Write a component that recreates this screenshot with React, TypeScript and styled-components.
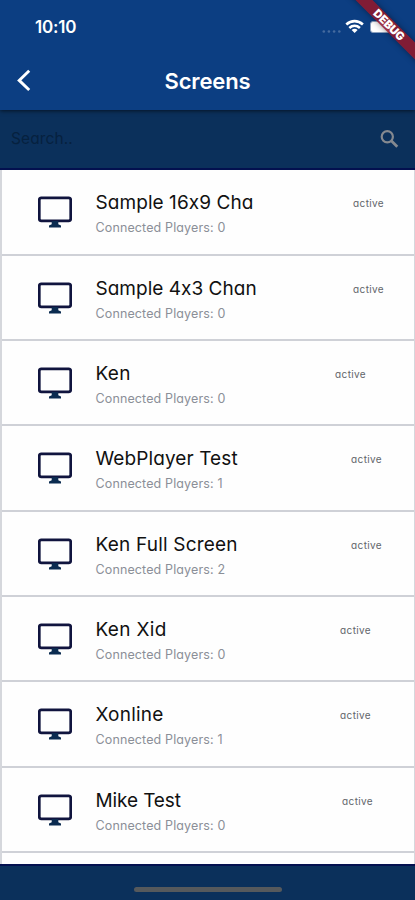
import React from "react";
import styled, { createGlobalStyle } from "styled-components";

const GlobalStyle = createGlobalStyle`
  * { box-sizing: border-box; }
  body { margin: 0; background: #0b305b; overflow: hidden; }
`;

const Phone = styled.main`
  position: relative;
  display: flex;
  flex-direction: column;
  width: 415px;
  height: 900px;
  overflow: hidden;
  background: #0b305b;
  font-family: Inter, "Open Sans", sans-serif;
  font-feature-settings: "cv11";
`;

const Header = styled.header`
  display: flex;
  flex-direction: column;
  flex: none;
  height: 110px;
  background: #0c3e82;
  box-shadow: 0 1px 4px rgba(0, 0, 0, 0.6);
  z-index: 1;
`;

const StatusBar = styled.div`
  display: flex;
  align-items: center;
  height: 53px;
  padding: 3px 10px 0 35px;
`;

const Clock = styled.time`
  flex: 1;
  padding-bottom: 2px;
  color: #fff;
  font-size: 17px;
  font-weight: 600;
  letter-spacing: -0.2px;
`;

const StatusIcons = styled.svg`
  display: block;
  width: 84px;
  height: 22px;
`;

const NavBar = styled.div`
  display: grid;
  grid-template-columns: 48px 1fr 48px;
  align-items: center;
  height: 56px;
`;

const BackButton = styled.button`
  display: flex;
  width: 48px;
  height: 48px;
  padding: 12px 0 0 16px;
  border: 0;
  background: none;
`;

const Title = styled.h1`
  margin: 0;
  color: #fff;
  font-size: 22px;
  font-weight: 600;
  line-height: 28px;
  letter-spacing: -0.15px;
  text-align: center;
`;

const SearchBar = styled.div`
  display: flex;
  flex: none;
  align-items: center;
  justify-content: space-between;
  height: 60px;
  padding: 0 16px 2px 11px;
  border-bottom: 2px solid #03104f;
`;

const SearchInput = styled.input`
  width: 200px;
  padding: 0;
  border: 0;
  outline: 0;
  background: none;
  font: 400 15.5px Inter, sans-serif;
  font-feature-settings: "cv11";
  letter-spacing: 0.1px;
  &::placeholder { color: #06213f; opacity: 1; }
`;

const List = styled.ul`
  flex: none;
  height: 694px;
  margin: 0;
  padding: 0.4px 0 0;
  overflow: hidden;
  list-style: none;
  background: #fefefe;
  border: solid #d5d7dc;
  border-width: 0 1px 0 2px;
`;

const Row = styled.li`
  display: flex;
  height: 85.35px;
  padding: 21px 0 0 36px;
  border-bottom: 2px solid #cfd1d7;
`;

const MonitorIcon = styled.svg`
  flex: none;
  width: 34px;
  height: 33px;
  margin-top: 5px;
`;

const Details = styled.div`
  flex: 1;
  padding-left: 23.5px;
`;

const Name = styled.div<{ $spacing: number }>`
  color: #111;
  font-size: 19px;
  font-weight: 400;
  line-height: 24px;
  letter-spacing: ${({ $spacing }) => $spacing}px;
  white-space: nowrap;
`;

const Players = styled.div`
  margin-top: 4px;
  color: #8b8f98;
  font-size: 12.5px;
  line-height: 18px;
  letter-spacing: 0.13px;
  white-space: nowrap;
`;

const Status = styled.span<{ $inset: number }>`
  margin-right: ${({ $inset }) => $inset}px;
  padding-top: 6px;
  color: #62656a;
  font-size: 10px;
  line-height: 13px;
  letter-spacing: 0.35px;
`;

const Footer = styled.footer`
  display: flex;
  flex: 1;
  justify-content: center;
  padding-top: 21px;
  border-top: 2px solid #03104f;
`;

const HomeIndicator = styled.div`
  width: 148px;
  height: 5px;
  border-radius: 3px;
  background: #56595c;
`;

const RibbonCorner = styled.div`
  position: absolute;
  top: 0;
  right: 0;
  z-index: 2;
  width: 80px;
  height: 80px;
  overflow: hidden;
`;

const Ribbon = styled.div`
  position: absolute;
  top: 19px;
  left: -3px;
  width: 114px;
  height: 12px;
  transform: rotate(45deg);
  background: rgba(145, 24, 42, 0.88);
  box-shadow: 0 0 6px rgba(0, 0, 0, 0.4);
  color: #fff;
  font-size: 11.3px;
  font-weight: 900;
  line-height: 12px;
  letter-spacing: -0.1px;
  text-align: center;
`;

const screens = [
  { name: "Sample 16x9 Cha", players: 0, spacing: 0.07, inset: 30 },
  { name: "Sample 4x3 Chan", players: 0, spacing: 0.02, inset: 30 },
  { name: "Ken", players: 0, spacing: 0.3, inset: 48 },
  { name: "WebPlayer Test", players: 1, spacing: 0.1, inset: 32 },
  { name: "Ken Full Screen", players: 2, spacing: 0.2, inset: 32 },
  { name: "Ken Xid", players: 0, spacing: 0.35, inset: 43 },
  { name: "Xonline", players: 1, spacing: 0.2, inset: 43 },
  { name: "Mike Test", players: 0, spacing: -0.1, inset: 41 },
];

export default function App() {
  return (
    <Phone>
      <GlobalStyle />
      <Header>
        <StatusBar>
          <Clock>10:10</Clock>
          <StatusIcons viewBox="0 0 84 22" aria-hidden="true">
            <g fill="#456b9f">
              <circle cx="2.8" cy="14.5" r="1.3" />
              <circle cx="7.9" cy="14.5" r="1.3" />
              <circle cx="13.1" cy="14.5" r="1.3" />
              <circle cx="18.3" cy="14.5" r="1.3" />
            </g>
            <g fill="none" stroke="#fff" strokeWidth="2.6">
              <path d="M25.3 7.5c5-4.5 11.6-4.5 16.6 0" />
              <path d="M28.3 11c3.2-2.8 7.4-2.8 10.6 0" />
            </g>
            <path d="M30.6 12.9c1.9-1.5 4.1-1.5 6 0L33.6 16z" fill="#fff" />
            <rect x="49.5" y="4.5" width="23" height="11" rx="2.5" fill="#fff" stroke="#899fbe" />
          </StatusIcons>
        </StatusBar>
        <NavBar>
          <BackButton aria-label="Back">
            <svg width="15" height="23" viewBox="0 0 15 23">
              <path d="M13.2 1.8 3.2 11.4l10 9.6" fill="none" stroke="#fff" strokeWidth="2.9" />
            </svg>
          </BackButton>
          <Title>Screens</Title>
        </NavBar>
      </Header>
      <SearchBar>
        <SearchInput placeholder="Search.." />
        <svg width="19" height="19" viewBox="0 0 19 19" fill="none" stroke="#858990">
          <circle cx="7.3" cy="7.8" r="5.6" strokeWidth="2.2" />
          <path d="m11.3 11.8 6 6" strokeWidth="2.7" />
        </svg>
      </SearchBar>
      <List>
        {screens.map(({ name, players, spacing, inset }) => (
          <Row key={name}>
            <MonitorIcon viewBox="0 0 34 33" aria-hidden="true">
              <rect x="1.3" y="1.8" width="31.4" height="23" rx="2" fill="none" stroke="#10143e" strokeWidth="2.7" />
              <path d="M13.7 25h6.6v3.2l2.7 1.3v2h-12v-2l2.7-1.3z" fill="#0b2b50" />
            </MonitorIcon>
            <Details>
              <Name $spacing={spacing}>{name}</Name>
              <Players>Connected Players: {players}</Players>
            </Details>
            <Status $inset={inset}>active</Status>
          </Row>
        ))}
      </List>
      <Footer>
        <HomeIndicator />
      </Footer>
      <RibbonCorner>
        <Ribbon>DEBUG</Ribbon>
      </RibbonCorner>
    </Phone>
  );
}
